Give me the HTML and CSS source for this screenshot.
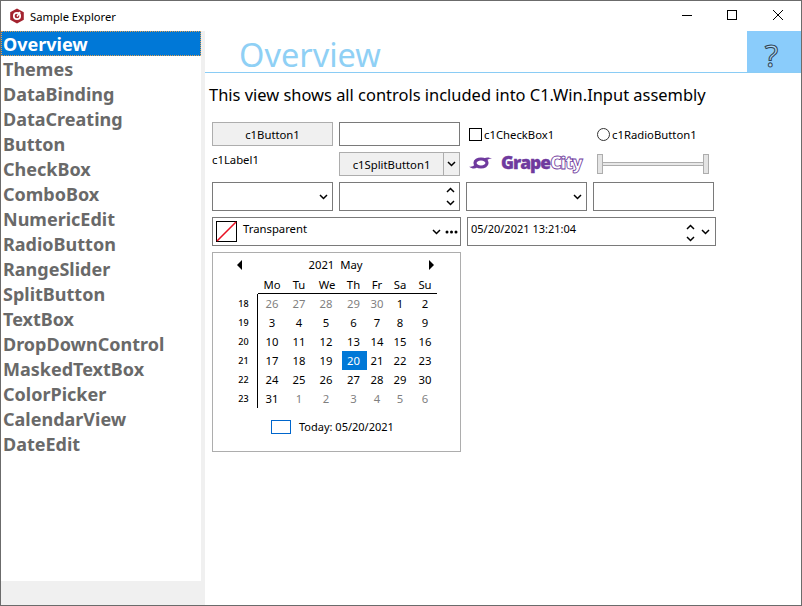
FILE: index.html
```html
<!DOCTYPE html>
<html lang="en">
<head>
<meta charset="utf-8">
<title>Sample Explorer</title>
<link rel="stylesheet" href="styles.css">
</head>
<body>
<div class="window">
  <header class="titlebar">
    <svg class="app-icon" width="16" height="16" viewBox="0 0 16 16"><path d="M8 .5l6.800 3.800v7.400L8 15.500l-6.800-3.800V4.300z" fill="#a3232f"/><circle cx="8" cy="8" r="3.200" fill="none" stroke="#fff" stroke-width="1.700"/><path d="M8 8.500l3-4.500" stroke="#fff" stroke-width="1.500"/></svg>
    <span class="app-title">Sample Explorer</span>
    <div class="win-buttons">
      <svg width="46" height="30" viewBox="0 0 46 30"><path d="M19 14.500h10" stroke="#000"/></svg>
      <svg width="46" height="30" viewBox="0 0 46 30"><rect x="18.500" y="9.500" width="9" height="9" fill="none" stroke="#000"/></svg>
      <svg width="46" height="30" viewBox="0 0 46 30"><path d="M18 9l10 10M28 9L18 19" stroke="#000" fill="none"/></svg>
    </div>
  </header>
  <div class="body">
    <aside class="side">
      <nav class="nav">
        <div class="nav-item active">Overview</div>
        <div class="nav-item">Themes</div>
        <div class="nav-item">DataBinding</div>
        <div class="nav-item">DataCreating</div>
        <div class="nav-item">Button</div>
        <div class="nav-item">CheckBox</div>
        <div class="nav-item">ComboBox</div>
        <div class="nav-item">NumericEdit</div>
        <div class="nav-item">RadioButton</div>
        <div class="nav-item">RangeSlider</div>
        <div class="nav-item">SplitButton</div>
        <div class="nav-item">TextBox</div>
        <div class="nav-item">DropDownControl</div>
        <div class="nav-item">MaskedTextBox</div>
        <div class="nav-item">ColorPicker</div>
        <div class="nav-item">CalendarView</div>
        <div class="nav-item">DateEdit</div>
      </nav>
    </aside>
    <main class="main">
      <div class="heading">
        <h1 class="heading-text">Overview</h1>
        <div class="help"><span class="help-mark">?</span></div>
      </div>
      <p class="lead">This view shows all controls included into C1.Win.Input assembly</p>
      <div class="controls">
        <div class="btn">c1Button1</div>
        <div class="input"></div>
        <label class="check"><span class="box"></span>c1CheckBox1</label>
        <label class="radio"><span class="dot"></span>c1RadioButton1</label>

        <div class="label">c1Label1</div>
        <div class="split"><span class="split-main">c1SplitButton1</span><span class="split-arrow"><svg width="9" height="6" viewBox="0 0 9 6"><path d="M1 1l3.500 3.500L8 1" class="chev"/></svg></span></div>
        <div class="logo">
          <svg width="24" height="14" viewBox="0 0 24 14"><ellipse cx="12" cy="7" rx="6" ry="4" fill="none" stroke="#6f3a9e" stroke-width="3.200"/><path d="M0 10.500c2 .5 4 0 6-2l2 3c-2 1.500-5 1.500-8-1zM23 3c-2-.5-3.500 0-5.500 1.500l-2.500-2c2.500-1.500 5.500-1.500 8 .5z" fill="#6f3a9e"/></svg>
          <span class="logo-text"><b>Grape</b><i>City</i></span>
        </div>
        <div class="slider"><span class="thumb"></span><span class="track"></span><span class="thumb"></span></div>

        <div class="input combo"><svg width="9" height="6" viewBox="0 0 9 6"><path d="M1 1l3.500 3.500L8 1" class="chev"/></svg></div>
        <div class="input spin"><svg width="9" height="6" viewBox="0 0 9 6"><path d="M1 5l3.500-3.500L8 5" class="chev"/></svg><svg width="9" height="6" viewBox="0 0 9 6"><path d="M1 1l3.500 3.500L8 1" class="chev"/></svg></div>
        <div class="input combo"><svg width="9" height="6" viewBox="0 0 9 6"><path d="M1 1l3.500 3.500L8 1" class="chev"/></svg></div>
        <div class="input"></div>
      </div>
      <div class="row-wide">
        <div class="input picker">
          <svg class="swatch" width="21" height="21" viewBox="0 0 21 21"><rect x=".5" y=".5" width="20" height="20" fill="#fff" stroke="#000"/><path d="M1 20L20 1" stroke="#e81123" stroke-width="1.600"/></svg>
          <span class="picker-text">Transparent</span>
          <svg class="picker-chev" width="9" height="6" viewBox="0 0 9 6"><path d="M1 1l3.500 3.500L8 1" class="chev"/></svg>
          <svg width="13" height="4" viewBox="0 0 13 4"><circle cx="2" cy="2" r="1.500"/><circle cx="6.500" cy="2" r="1.500"/><circle cx="11" cy="2" r="1.500"/></svg>
        </div>
        <div class="input dateedit">
          <span class="date-text">05/20/2021 13:21:04</span>
          <span class="date-spin"><svg width="9" height="6" viewBox="0 0 9 6"><path d="M1 5l3.500-3.500L8 5" class="chev"/></svg><svg width="9" height="6" viewBox="0 0 9 6"><path d="M1 1l3.500 3.500L8 1" class="chev"/></svg></span>
          <svg width="9" height="6" viewBox="0 0 9 6"><path d="M1 1l3.500 3.500L8 1" class="chev"/></svg>
        </div>
      </div>
      <section class="calendar">
        <div class="cal-head">
          <svg width="7" height="10" viewBox="0 0 7 10"><path d="M6 0v10L1 5z"/></svg>
          <span class="cal-title">2021&nbsp;&nbsp;May</span>
          <svg width="7" height="10" viewBox="0 0 7 10"><path d="M1 0v10l5-5z"/></svg>
        </div>
        <div class="cal-grid">
          <div class="corner"></div>
          <div class="dow">Mo</div><div class="dow">Tu</div><div class="dow">We</div><div class="dow nudge">Th</div><div class="dow">Fr</div><div class="dow">Sa</div><div class="dow">Su</div>
          <div class="wk">18</div>
          <div class="d dim">26</div><div class="d dim">27</div><div class="d dim nudge">28</div><div class="d dim nudge">29</div><div class="d dim">30</div><div class="d">1</div><div class="d">2</div>
          <div class="wk">19</div>
          <div class="d">3</div><div class="d">4</div><div class="d nudge">5</div><div class="d nudge">6</div><div class="d">7</div><div class="d">8</div><div class="d">9</div>
          <div class="wk">20</div>
          <div class="d">10</div><div class="d">11</div><div class="d nudge">12</div><div class="d nudge">13</div><div class="d">14</div><div class="d">15</div><div class="d">16</div>
          <div class="wk">21</div>
          <div class="d">17</div><div class="d">18</div><div class="d nudge">19</div><div class="d sel nudge">20</div><div class="d">21</div><div class="d">22</div><div class="d">23</div>
          <div class="wk">22</div>
          <div class="d">24</div><div class="d">25</div><div class="d nudge">26</div><div class="d nudge">27</div><div class="d">28</div><div class="d">29</div><div class="d">30</div>
          <div class="wk">23</div>
          <div class="d">31</div><div class="d dim">1</div><div class="d dim nudge">2</div><div class="d dim nudge">3</div><div class="d dim">4</div><div class="d dim">5</div><div class="d dim">6</div>
        </div>
        <div class="today"><span class="today-box"></span><span>Today: 05/20/2021</span></div>
      </section>
    </main>
  </div>
</div>
</body>
</html>
```
FILE: styles.css
```css
* { box-sizing: border-box; }
html, body { margin: 0; padding: 0; }
body { width: 802px; height: 606px; overflow: hidden; background: #fff; font-family: "Noto Sans", "Open Sans", sans-serif; font-size: 11.3px; color: #000; }
.window { width: 802px; height: 606px; border: 1px solid #6b6b6b; display: flex; flex-direction: column; background: #fff; }
.titlebar { height: 30px; flex: none; display: flex; align-items: center; padding-left: 8px; }
.app-icon { flex: none; }
.app-title { margin-left: 5px; font-size: 11.2px; }
.win-buttons { margin-left: auto; display: flex; }
.win-buttons svg { display: block; }
.body { flex: 1; display: flex; min-height: 0; }
.side { width: 204px; flex: none; background: #f0f0f0; padding-right: 4px; }
.nav { height: 550px; background: #fff; }
.nav-item { height: 25px; line-height: 27px; padding-left: 2px; font-size: 18px; font-weight: 700; color: #696969; white-space: nowrap; }
.nav-item.active { background: #0078d7; color: #fff; outline: 1px dotted #e0a050; outline-offset: -1px; }
.main { flex: 1; min-width: 0; }
.heading { height: 42px; border-bottom: 1px solid #8accf5; display: flex; justify-content: space-between; padding-left: 34px; }
.heading-text { margin: 0; font-size: 32.5px; font-weight: 400; line-height: 47px; color: #8fd0f5; }
.help { width: 54px; background: #8accfb; display: flex; justify-content: center; align-items: center; padding: 7px 5px 0 0; }
.help-mark { font-size: 31px; line-height: 1; color: #a9d9fb; -webkit-text-stroke: 1px #2f4252; }
.lead { margin: 0; padding: 11px 0 0 4px; height: 49px; font-size: 16.45px; line-height: 22px; white-space: nowrap; }
.controls { margin-left: 7px; display: grid; grid-template-columns: 121px 121px 121px 121px; grid-template-rows: 24px 24px 29px; column-gap: 6px; row-gap: 6px; width: 502px; }
.btn { background: #f0f0f0; border: 1px solid #adadad; display: flex; align-items: center; justify-content: center; }
.input { border: 1px solid #7a7a7a; background: #fff; }
.check, .radio { display: flex; align-items: center; white-space: nowrap; padding-left: 3px; }
.radio { padding-left: 4px; }
.box { width: 13px; height: 13px; border: 1px solid #000; margin-right: 2px; flex: none; }
.dot { width: 13px; height: 13px; border: 1px solid #333; border-radius: 50%; margin-right: 2px; flex: none; }
.label { line-height: 16px; }
.split { display: flex; background: #f0f0f0; border: 1px solid #adadad; }
.split-main { flex: 1; display: flex; align-items: center; justify-content: center; }
.split-arrow { width: 16px; border-left: 1px solid #adadad; display: flex; align-items: center; justify-content: center; }
.chev { fill: none; stroke: #000; stroke-width: 1.500; }
.logo { display: flex; align-items: center; gap: 8px; padding: 0 0 3px 3px; }
.logo-text { font-family: "Open Sans", sans-serif; font-size: 17.5px; letter-spacing: -1px; line-height: 1; }
.logo-text b { color: #6f3a9e; font-weight: 800; -webkit-text-stroke: .3px #6f3a9e; }
.logo-text i { font-style: normal; font-weight: 800; color: #fff; -webkit-text-stroke: .8px #6f3a9e; }
.slider { display: flex; align-items: center; padding: 0 5px 0 4px; }
.thumb { width: 6px; height: 20px; flex: none; background: #e4e4e4; border: 1px solid #adadad; }
.track { flex: 1; height: 4px; background: #e8e8e8; border: 1px solid #adadad; margin: 0 -1px; }
.combo { display: flex; align-items: center; justify-content: flex-end; padding-right: 4px; }
.spin { display: flex; flex-direction: column; align-items: flex-end; justify-content: space-around; padding: 1px 4px 1px 0; }
.spin svg, .date-spin svg { display: block; }
.row-wide { margin: 6px 0 0 7px; display: flex; gap: 6px; height: 29px; }
.picker { width: 249px; display: flex; align-items: center; padding: 0 2px 0 3px; }
.swatch { flex: none; }
.picker-text { margin-left: 6px; margin-bottom: 6px; }
.picker-chev { margin-left: auto; margin-right: 4px; }
.dateedit { width: 249px; display: flex; align-items: center; padding: 0 5px 0 3px; font-size: 11px; }
.date-text { margin-bottom: 6px; }
.date-spin { margin-left: auto; margin-right: 6px; height: 100%; display: flex; flex-direction: column; justify-content: space-around; padding: 3px 0 0; }
.calendar { margin: 6px 0 0 7px; width: 249px; height: 200px; border: 1px solid #adadad; }
.cal-head { height: 23px; display: flex; align-items: center; justify-content: center; padding: 0 25px 0 23px; }
.cal-title { flex: 1; text-align: center; }
.cal-grid { display: grid; grid-template-columns: 45px 28px 26px 30px 25px 20px 26px 24px; grid-template-rows: 18px repeat(6, 19px); }
.dow { display: flex; align-items: center; justify-content: center; border-bottom: 1px solid #000; padding-bottom: 1px; }
.wk { font-size: 9px; font-weight: 500; display: flex; align-items: center; justify-content: center; border-right: 1px solid #000; padding-left: 18px; padding-right: 1px; }
.d { display: flex; align-items: center; justify-content: center; }
.nudge { padding-right: 2px; }
.dim { color: #7f7f7f; }
.sel { background: #0078d7; color: #fff; }
.today { display: flex; align-items: center; padding: 11px 0 0 58px; gap: 8px; font-size: 11px; }
.today-box { width: 20px; height: 14px; border: 1px solid #0066cc; }
```
